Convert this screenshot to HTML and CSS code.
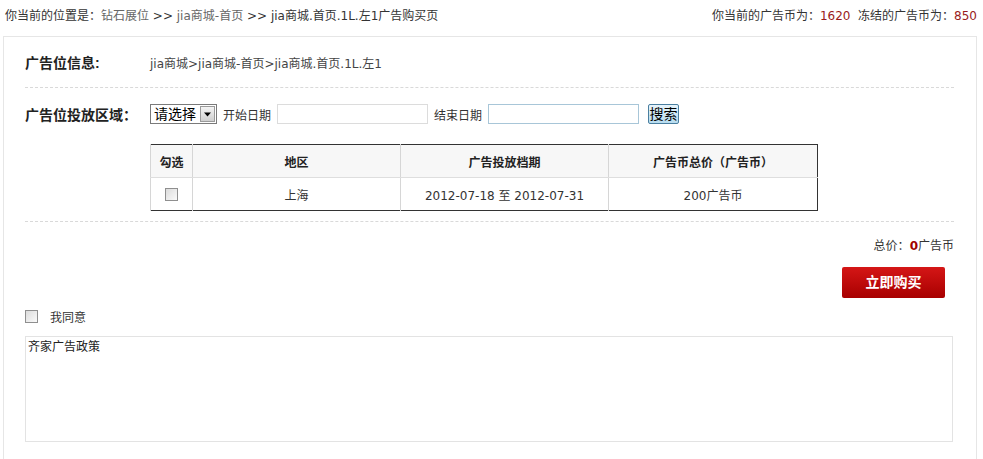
FILE: index.html
```html
<!DOCTYPE html>
<html lang="zh-CN">
<head>
<meta charset="utf-8">
<title>广告购买页</title>
<link rel="stylesheet" href="styles.css">
</head>
<body>
<div class="topbar">
  <div class="crumbs">你当前的位置是：<a class="lnk">钻石展位</a> &gt;&gt; <a class="lnk">jia商城-首页</a> &gt;&gt; <span class="cur">jia商城.首页.1L.左1广告购买页</span></div>
  <div class="coins">你当前的广告币为：<span class="num">1620</span>&nbsp;&nbsp;冻结的广告币为：<span class="num">850</span></div>
</div>
<div class="box">
  <div class="row info">
    <div class="label">广告位信息:</div>
    <div class="val">jia商城&gt;jia商城-首页&gt;jia商城.首页.1L.左1</div>
  </div>
  <div class="dash"></div>
  <div class="row area">
    <div class="label">广告位投放区域：</div>
    <div class="select"><span class="seltext">请选择</span><span class="arrow"><svg width="9" height="5" viewBox="0 0 9 5"><path d="M1 0.5h7L4.5 4.5z" fill="#000"/></svg></span></div>
    <span class="ftxt">开始日期</span>
    <span class="input"></span>
    <span class="ftxt">结束日期</span>
    <span class="input focus"></span>
    <span class="sbtn">搜索</span>
  </div>
  <table class="tbl">
    <tr class="head"><th class="c1">勾选</th><th class="c2">地区</th><th class="c3">广告投放档期</th><th class="c4">广告币总价（广告币）</th></tr>
    <tr><td class="c1"><span class="cb"></span></td><td>上海</td><td>2012-07-18 至 2012-07-31</td><td>200广告币</td></tr>
  </table>
  <div class="dash d2"></div>
  <div class="total">总价：<b class="zero">0</b>广告币</div>
  <div class="buyrow"><span class="buy">立即购买</span></div>
  <div class="agree"><span class="cb"></span><span class="agtxt">我同意</span></div>
  <div class="policy">齐家广告政策</div>
</div>
</body>
</html>
```
FILE: styles.css
```css
html, body { margin: 0; padding: 0; background: #fff; }
body {
  font-family: "DejaVu Sans", "Noto Sans CJK SC", sans-serif;
  font-size: 12px;
  color: #333;
  width: 983px;
  height: 459px;
  overflow: hidden;
}
.topbar {
  display: flex;
  justify-content: space-between;
  padding: 8px 6px 0 5px;
  height: 28px;
  box-sizing: border-box;
  line-height: 16px;
}
.lnk { color: #666; text-decoration: none; }
.cur { color: #333; }
.num { color: #9a1b1b; }
.box {
  margin-left: 3px;
  width: 974px;
  border: 1px solid #e6e6e6;
  border-bottom: none;
  margin-top: 8px;
  height: 440px;
  box-sizing: border-box;
  padding: 0 22px 0 21px;
}
.row { display: flex; align-items: center; }
.label {
  font-family: "Liberation Sans", "Noto Sans CJK SC", sans-serif;
  font-size: 14px;
  font-weight: bold;
  color: #222;
  width: 125px;
}
.info { height: 50px; }
.info .val { color: #444; }
.dash { border-top: 1px dashed #d9d9d9; margin-right: 0; }
.area { height: 50px; padding-top: 1px; }
.select {
  display: flex;
  width: 67px;
  height: 20px;
  border: 1px solid #7a7a7a;
  box-sizing: border-box;
  align-items: center;
  background: #fff;
}
.seltext { font-size: 14px; color: #000; padding-left: 3px; flex: 1; line-height: 18px; }
.arrow {
  width: 15px; height: 16px; margin-right: 1px;
  background: linear-gradient(#f4f4f4, #cfcfcf);
  border: 1px solid #9a9a9a;
  box-sizing: border-box;
  display: flex; align-items: center; justify-content: center;
}
.ftxt { margin: 0 6px 0 6px; color: #333; }
.input {
  display: inline-block;
  width: 151px; height: 20px;
  border: 1px solid #dcdcdc;
  box-sizing: border-box;
}
.input.focus { border-color: #a8c6d8; }
.sbtn {
  margin-left: 9px;
  width: 31px; height: 20px;
  box-sizing: border-box;
  border: 1px solid #4a7fa0;
  border-radius: 2px;
  background: linear-gradient(#e8f4fb, #b7dcef);
  font-size: 14px;
  color: #000;
  text-align: center;
  line-height: 18px;
}
.tbl {
  margin: 5px 0 10px 125px;
  width: 668px;
  border-collapse: collapse;
  border: 1px solid #333;
}
.tbl th, .tbl td {
  height: 32px;
  text-align: center;
  border-left: 1px solid #d6d6d6;
  padding: 0;
  font-size: 12px;
}
.tbl th { font-weight: bold; background: #f7f7f7; color: #222; border-bottom: 1px solid #dedede; }
.tbl td { color: #333; }
.c1 { width: 41px; }
.c2 { width: 207px; }
.c3 { width: 207px; }
.cb {
  display: inline-block;
  width: 11px; height: 11px;
  border: 1px solid #8f8f8f;
  background: linear-gradient(135deg, #dcdcdc, #fafafa);
  vertical-align: middle;
}
.total { text-align: right; padding-top: 16px; padding-right: 0; line-height: 16px; }
.zero { color: #a00000; }
.buyrow { display: flex; justify-content: flex-end; padding-right: 9px; margin-top: 13px; }
.buy {
  width: 103px; height: 31px;
  background: linear-gradient(#d51616, #a80000);
  border-radius: 2px;
  color: #fff;
  font-size: 14px;
  font-weight: bold;
  text-align: center;
  line-height: 31px;
}
.agree { display: flex; align-items: center; margin-top: 11px; height: 14px; }
.agree .cb { margin-left: 0; }
.agtxt { margin-left: 12px; color: #333; }
.policy {
  margin-top: 13px;
  width: 928px;
  height: 106px;
  box-sizing: border-box;
  border: 1px solid #e3e3e3;
  padding: 3px 2px;
  color: #222;
  line-height: 14px;
}
```
